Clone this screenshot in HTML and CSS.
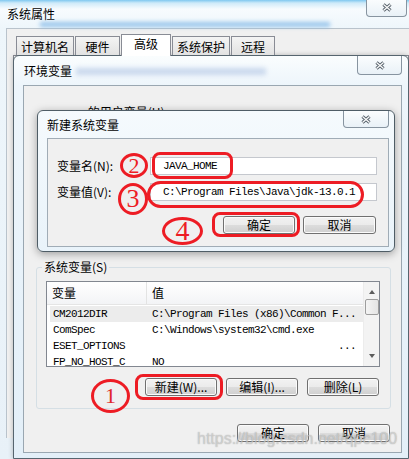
FILE: index.html
```html
<!DOCTYPE html>
<html lang="zh-CN">
<head>
<meta charset="utf-8">
<title>系统属性</title>
<link rel="stylesheet" href="styles.css">
</head>
<body>
<div class="sys">
  <div class="sys-bar">
    <div class="sys-title">系统属性</div>
    <div class="close sys-close">
      <svg width="10" height="9" viewBox="0 0 10 9"><path d="M1.5 1.5L8.5 7.5M8.5 1.5L1.5 7.5" stroke="#56616b" stroke-width="3.2"/><path d="M1.5 1.5L8.5 7.5M8.5 1.5L1.5 7.5" stroke="#fbfbfb" stroke-width="1.3"/></svg>
    </div>
  </div>
  <div class="sys-client">
    <div class="tabs">
      <span class="tab w58">计算机名</span>
      <span class="tab w45">硬件</span>
      <span class="tab w50 active">高级</span>
      <span class="tab w58">系统保护</span>
      <span class="tab w44">远程</span>
    </div>
    <div class="tab-panel"></div>
  </div>
</div>

<div class="env">
  <div class="env-bar">
    <div class="env-title">环境变量</div>
    <div class="close env-close">
      <svg width="10" height="9" viewBox="0 0 10 9"><path d="M1.5 1.5L8.5 7.5M8.5 1.5L1.5 7.5" stroke="#56616b" stroke-width="3.2"/><path d="M1.5 1.5L8.5 7.5M8.5 1.5L1.5 7.5" stroke="#fbfbfb" stroke-width="1.3"/></svg>
    </div>
  </div>
  <div class="env-client">
    <div class="user-label">zzz 的用户变量(U)</div>
    <fieldset class="group">
      <legend>系统变量(S)</legend>
      <div class="list">
        <div class="list-main">
          <div class="list-head">
            <div class="hc1">变量</div>
            <div class="hc2">值</div>
          </div>
          <div class="row sel"><div class="c1">CM2012DIR</div><div class="c2">C:\Program Files (x86)\Common F...</div></div>
          <div class="row"><div class="c1">ComSpec</div><div class="c2">C:\Windows\system32\cmd.exe</div></div>
          <div class="row"><div class="c1">ESET_OPTIONS</div><div class="c2 dots">...</div></div>
          <div class="row"><div class="c1">FP_NO_HOST_C</div><div class="c2">NO</div></div>
        </div>
        <div class="scroll">
          <div class="arrow up"></div>
          <div class="thumb"></div>
          <div class="track"></div>
          <div class="arrow down"></div>
        </div>
      </div>
      <div class="btn-row">
        <button class="btn">新建(W)...</button>
        <button class="btn">编辑(I)...</button>
        <button class="btn">删除(L)</button>
      </div>
    </fieldset>
    <div class="env-actions">
      <button class="btn">确定</button>
      <button class="btn">取消</button>
    </div>
  </div>
</div>

<div class="newvar">
  <div class="nv-bar">
    <div class="nv-title">新建系统变量</div>
    <div class="close nv-close">
      <svg width="10" height="9" viewBox="0 0 10 9"><path d="M1.5 1.5L8.5 7.5M8.5 1.5L1.5 7.5" stroke="#56616b" stroke-width="3.2"/><path d="M1.5 1.5L8.5 7.5M8.5 1.5L1.5 7.5" stroke="#fbfbfb" stroke-width="1.3"/></svg>
    </div>
  </div>
  <div class="nv-client">
    <div class="field-row">
      <label class="lbl">变量名(N):</label>
      <div class="field">JAVA_HOME</div>
    </div>
    <div class="field-row second">
      <label class="lbl">变量值(V):</label>
      <div class="field">C:\Program Files\Java\jdk-13.0.1</div>
    </div>
    <div class="nv-actions">
      <button class="btn">确定</button>
      <button class="btn w73">取消</button>
    </div>
  </div>
</div>

<div class="mark m-name"></div>
<div class="mark m-value"></div>
<div class="mark m-ok"></div>
<div class="mark m-new"></div>
<div class="mark num n2">2</div>
<div class="mark num n3">3</div>
<div class="mark num n4">4</div>
<div class="mark num n1">1</div>

<div class="watermark">https://blog.csdn.net/qpc100</div>
</body>
</html>
```

FILE: styles.css
```css
* { box-sizing: border-box; }

body {
  margin: 0;
  width: 409px;
  height: 459px;
  overflow: hidden;
  position: relative;
  background: #eaf3f9;
  font-family: "Noto Sans CJK SC", "Noto Sans", sans-serif;
  font-size: 12px;
  color: #000;
}

/* ---------- outer window ---------- */
.sys {
  position: absolute;
  left: 0;
  top: 0;
  width: 409px;
  height: 459px;
  display: flex;
  flex-direction: column;
  background: linear-gradient(to bottom, #7fc8f0 0px, #cfeaf9 3px, #f7fbfe 9px, #eef6fb 28px, #e8f1f8 100%);
}

.sys-bar {
  height: 28px;
  display: flex;
  position: relative;
  flex-shrink: 0;
}

.sys-bar::after {
  content: "";
  position: absolute;
  left: 40px;
  top: 22px;
  width: 290px;
  height: 5px;
  background: #7cb5e6;
  filter: blur(2px);
  opacity: .75;
}

.sys-title {
  flex: 1;
  padding-left: 7px;
  line-height: 28px;
  font-size: 12px;
}

.close {
  display: flex;
  align-items: center;
  justify-content: center;
  border: 1px solid #8794a0;
  border-top: none;
  border-radius: 0 0 4px 4px;
  background: linear-gradient(#fbfdfe, #e9f1f7);
  flex-shrink: 0;
}

.sys-close {
  width: 41px;
  height: 18px;
  margin-right: 2px;
  margin-top: -1px;
}

.sys-client {
  flex: 1;
  margin: 0 0 21px 6px;
  background: #f0f0f0;
  border-left: 1px solid #b9c3cc;
  border-top: 1px solid #b9c3cc;
  padding: 7px 0 0 9px;
  display: flex;
  flex-direction: column;
}

.tabs {
  display: flex;
  align-items: flex-end;
  height: 19px;
  position: relative;
  z-index: 1;
}

.tab {
  height: 19px;
  border: 1px solid #898c95;
  border-bottom: none;
  background: linear-gradient(#f4f4f4, #e2e2e2);
  line-height: 19px;
  text-align: center;
  margin-right: 1px;
  font-size: 12px;
}

.tab.active {
  height: 22px;
  background: #fff;
  line-height: 18px;
  margin-bottom: -1px;
}

.w58 { width: 58px; }
.w45 { width: 45px; }
.w50 { width: 50px; }
.w44 { width: 44px; }

.tab-panel {
  flex: 1;
  margin-left: -3px;
  border: 1px solid #898c95;
  background: #fff;
}

/* ---------- environment window ---------- */
.env {
  position: absolute;
  left: 13px;
  top: 55px;
  width: 396px;
  height: 404px;
  border: 1px solid #56656f;
  border-radius: 6px 6px 0 0;
  background: linear-gradient(#fafdfe, #edf5fb 30px, #e3eff8);
  display: flex;
  flex-direction: column;
  box-shadow: 0 0 5px rgba(0, 0, 0, .25);
}

.env-bar {
  height: 29px;
  display: flex;
  flex-shrink: 0;
  position: relative;
}

.env-bar::after {
  content: "";
  position: absolute;
  left: 62px;
  top: 12px;
  width: 190px;
  height: 7px;
  background: #a7bde0;
  filter: blur(2.5px);
  opacity: .55;
}

.env-title {
  flex: 1;
  padding-left: 10px;
  line-height: 30px;
  position: relative;
  z-index: 1;
}

.env-close {
  width: 45px;
  height: 19px;
  margin-right: 6px;
}

.env-client {
  flex: 1;
  margin: 0 6px 5px 9px;
  border: 1px solid #9aa7b1;
  background: #f0f0f0;
  display: flex;
  flex-direction: column;
}

.user-label {
  margin: 18px 0 0 44px;
  line-height: 16px;
}

.group {
  margin: 139px 0 0 12px;
  width: 355px;
  min-width: 0;
  border: 1px solid #d5dfe5;
  border-radius: 3px;
  padding: 6px 11px 12px 9px;
  align-self: flex-start;
}

.group legend {
  font-size: 12px;
  line-height: 16px;
  padding: 0 2px;
  margin-left: -4px;
}

.list {
  width: 334px;
  height: 86px;
  border: 1px solid #828790;
  background: #fff;
  display: flex;
  overflow: hidden;
}

.list-main {
  flex: 1;
  overflow: hidden;
}

.list-head {
  display: flex;
  height: 23px;
  border-bottom: 1px solid #e5e5e5;
  background: linear-gradient(#ffffff, #f3f4f6);
  line-height: 22px;
  margin-bottom: 1px;
}

.hc1 {
  width: 100px;
  border-right: 1px solid #e3e3e3;
  padding-left: 5px;
}

.hc2 {
  flex: 1;
  padding-left: 5px;
}

.row {
  display: flex;
  height: 16px;
  line-height: 16px;
  font-family: "Liberation Mono", "DejaVu Sans Mono", monospace;
  font-size: 11px;
  letter-spacing: -0.6px;
  white-space: nowrap;
}

.row.sel {
  background: #ececec;
  margin-left: 3px;
}

.row.sel .c1 { width: 97px; padding-left: 3px; }

.c1 {
  width: 100px;
  padding-left: 6px;
}

.c2 {
  flex: 1;
  padding-left: 5px;
}

.c2.dots {
  text-align: right;
  padding-right: 7px;
}

.scroll {
  width: 16px;
  background: #f3f3f3;
  border-left: 1px solid #ececec;
  display: flex;
  flex-direction: column;
  align-items: center;
}

.arrow {
  width: 0;
  height: 0;
  border-left: 3.5px solid transparent;
  border-right: 3.5px solid transparent;
}

.arrow.up {
  margin-top: 8px;
  border-bottom: 4px solid #5c5c5c;
}

.arrow.down {
  margin-bottom: 8px;
  border-top: 4px solid #5c5c5c;
}

.thumb {
  margin-top: 5px;
  width: 14px;
  height: 16px;
  border: 1px solid #9d9d9d;
  border-radius: 2px;
  background: linear-gradient(to right, #f4f4f4, #e4e4e4);
}

.track { flex: 1; }

.btn-row {
  display: flex;
  justify-content: flex-end;
  gap: 9px;
  margin-top: 11px;
}

.btn {
  width: 72px;
  height: 18px;
  padding: 0;
  border: 1px solid #707070;
  border-radius: 3px;
  background: linear-gradient(#f2f2f2 0%, #ebebeb 50%, #dddddd 50%, #cfcfcf 100%);
  box-shadow: inset 0 0 0 1px #fbfbfb;
  font-family: "Noto Sans CJK SC", "Noto Sans", sans-serif;
  font-size: 12px;
  line-height: 16px;
  color: #000;
  text-align: center;
}

.w73 { width: 73px; }

.env-actions {
  display: flex;
  justify-content: flex-end;
  gap: 9px;
  margin: 15px 11px 0 0;
}

/* ---------- new variable dialog ---------- */
.newvar {
  position: absolute;
  left: 37px;
  top: 110px;
  width: 358px;
  height: 142px;
  border: 1px solid #4f5d66;
  border-radius: 6px;
  background: linear-gradient(#f5fafd, #e9f3fa);
  box-shadow: 0 2px 8px rgba(0, 0, 0, .35);
  display: flex;
  flex-direction: column;
}

.nv-bar {
  height: 27px;
  display: flex;
  flex-shrink: 0;
}

.nv-title {
  flex: 1;
  padding-left: 9px;
  line-height: 27px;
}

.nv-close {
  width: 46px;
  height: 17px;
  margin-right: 5px;
}

.nv-client {
  flex: 1;
  margin: 0 5px 4px 9px;
  border: 1px solid #a0acb6;
  background: #f0f0f0;
  padding: 18px 11px 0 9px;
}

.field-row {
  display: flex;
  align-items: center;
  height: 18px;
}

.field-row.second { margin-top: 8px; }

.lbl {
  width: 93px;
  line-height: 18px;
}

.field {
  flex: 1;
  height: 18px;
  border: 1px solid #c5c8ce;
  background: #fff;
  padding-left: 12px;
  line-height: 16px;
  font-family: "Liberation Mono", "DejaVu Sans Mono", monospace;
  font-size: 11px;
  letter-spacing: -0.6px;
  white-space: nowrap;
}

.nv-actions {
  display: flex;
  justify-content: flex-end;
  gap: 8px;
  margin-top: 15px;
  padding-right: 1px;
}

/* ---------- red annotations ---------- */
.mark {
  position: absolute;
  border: 3px solid #ed1c24;
}

.m-name { left: 152px; top: 152px; width: 81px; height: 27px; border-radius: 8px; }
.m-value { left: 147px; top: 181px; width: 217px; height: 27px; border-radius: 14px; }
.m-ok { left: 212px; top: 212px; width: 88px; height: 25px; border-radius: 8px; }
.m-new { left: 135px; top: 374px; width: 88px; height: 26px; border-radius: 8px; }

.num {
  border-radius: 50%;
  display: flex;
  align-items: center;
  justify-content: center;
  font-family: "Liberation Serif", serif;
  color: #ed1c24;
  line-height: 1;
}

.n2 { left: 120px; top: 153px; width: 28px; height: 25px; font-size: 22px; }
.n3 { left: 118px; top: 183px; width: 30px; height: 32px; font-size: 26px; }
.n4 { left: 162px; top: 217px; width: 41px; height: 28px; font-size: 28px; }
.n1 { left: 91px; top: 379px; width: 39px; height: 34px; font-size: 22px; color: #e0282a; }

.watermark {
  position: absolute;
  left: 197px;
  top: 429px;
  font-family: "Liberation Sans", Arial, sans-serif;
  font-size: 16px;
  line-height: 20px;
  color: rgba(235, 235, 235, .55);
  text-shadow: 0 0 1px rgba(90, 90, 90, .55);
  white-space: nowrap;
}
```
